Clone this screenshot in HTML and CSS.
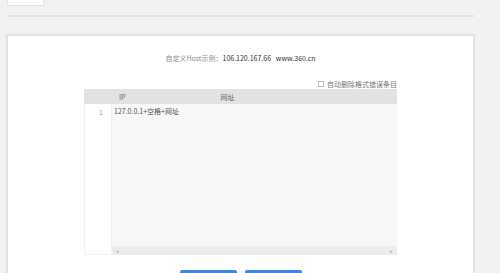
FILE: index.html
```html
<!DOCTYPE html>
<html>

<head>
    <meta charset="UTF-8">
    <title>Host</title>
    <link rel="stylesheet" href="styles.css">
</head>

<body>
    <div class="page">
        <div class="topbtn"></div>
        <div class="divider"></div>
        <div class="panel">
            <p class="example">自定义Host示例：<b>106.120.167.66&nbsp;&nbsp;&nbsp;www.360.cn</b></p>
            <div class="editor">
                <label class="auto"><span class="box"></span>自动删除格式错误条目</label>
                <div class="head">
                    <span class="ip">IP</span>
                    <span class="url">网址</span>
                </div>
                <div class="body">
                    <div class="gutter">1</div>
                    <div class="text">
                        <div class="lines">127.0.0.1+空格+网址</div>
                        <div class="hscroll">
                            <span>&#9666;</span>
                            <span>&#9656;</span>
                        </div>
                    </div>
                </div>
            </div>
            <div class="btns">
                <a href="#" class="btn"></a>
                <a href="#" class="btn"></a>
            </div>
        </div>
    </div>
</body>

</html>
```

FILE: styles.css
```css
* {
    margin: 0;
    padding: 0;
    box-sizing: border-box;
}

body {
    background-color: #f1f2f4;
    font-family: "Noto Sans CJK SC", "Liberation Sans", sans-serif;
    font-size: 7px;
    color: #555;
    overflow: hidden;
}

.page {
    width: 469px;
    margin-left: 6px;
}

.topbtn {
    width: 37px;
    height: 6px;
    margin-left: 1px;
    background-color: #fff;
    border: 1px solid #e2e3e5;
    border-top: none;
}

.divider {
    height: 2px;
    margin: 9px 1px 0 1px;
    background-color: #e1e2e4;
}

.panel {
    margin-top: 17px;
    height: 260px;
    background-color: #fff;
    border: 2px solid #e3e3e3;
    box-shadow: 0 0 2px #ececec;
    padding-top: 17px;
}

.example {
    text-align: center;
    color: #888;
    line-height: 10px;
}

.example b {
    font-weight: normal;
    color: #333;
}

.editor {
    width: 313px;
    margin: 16px auto 0 auto;
}

.auto {
    display: flex;
    justify-content: flex-end;
    align-items: center;
    gap: 3px;
    height: 9px;
    color: #777;
    margin-bottom: 1px;
}

.box {
    width: 6px;
    height: 6px;
    border: 1px solid #bbb;
    background-color: #fff;
}

.head {
    height: 15px;
    background-color: #e2e2e2;
    display: flex;
    align-items: center;
    color: #666;
}

.ip {
    margin-left: 35px;
}

.url {
    margin-left: 95px;
}

.body {
    display: flex;
    height: 151px;
}

.gutter {
    width: 28px;
    border: 1px solid #f0f0f0;
    border-top: none;
    text-align: right;
    padding: 4px 8px 0 0;
    color: #999;
    line-height: 9px;
}

.text {
    flex: 1;
    display: flex;
    flex-direction: column;
    background-color: #f7f7f7;
}

.lines {
    flex: 1;
    padding: 3px 0 0 2px;
    line-height: 9px;
    color: #555;
}

.hscroll {
    height: 9px;
    background-color: #ececec;
    display: flex;
    justify-content: space-between;
    align-items: center;
    padding: 0 4px;
    font-size: 5px;
    color: #aaa;
}

.btns {
    display: flex;
    justify-content: center;
    gap: 8px;
    margin-top: 15px;
    padding-left: 1px;
}

.btn {
    display: block;
    width: 57px;
    height: 20px;
    border-radius: 2px;
    background-color: #3a86e0;
}
```
